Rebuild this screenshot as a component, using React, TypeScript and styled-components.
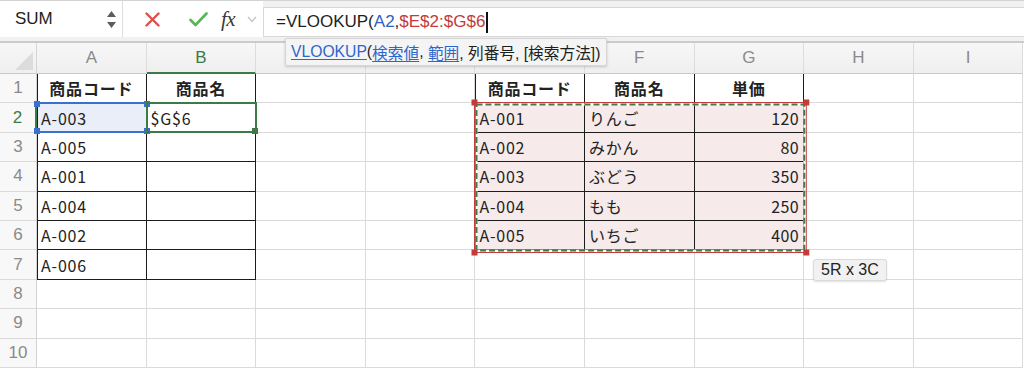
import React from 'react';
import styled, { createGlobalStyle } from 'styled-components';

const COLW = 109.6;
const ROWH = 29.4;
const HEADH = 31;
const RHW = 37;

const BLUE = '#3b6fd0';
const GREEN = '#3c7b48';
const RED = '#c23c3c';
const DARK = '#1c1c1c';
const GRID = '#dadada';

const GlobalStyle = createGlobalStyle`
  html, body { margin: 0; padding: 0; background: #fff; overflow: hidden; }
  body { font-family: "Liberation Sans", "Noto Sans CJK JP", sans-serif; }
  * { box-sizing: border-box; }
`;

const Page = styled.div`
  position: relative;
  width: 1024px;
  height: 369px;
  overflow: hidden;
  background: #fff;
`;

const Toolbar = styled.div`
  display: flex;
  height: 43px;
  border-top: 1px solid #d3d3d3;
  border-bottom: 2px solid #cbcbcb;
  padding-bottom: 4px;
  background: #f1f1f1;
`;

const NameBox = styled.div`
  width: 123px;
  background: #fff;
  border-right: 1px solid #dedede;
  display: flex;
  align-items: center;
  justify-content: space-between;
  padding: 0 6px 0 15px;
  font-size: 17px;
  color: #1e1e1e;
`;

const Spinner = styled.div`
  display: flex;
  flex-direction: column;
  gap: 5px;
  align-items: center;
`;

const IconGroup = styled.div`
  width: 140px;
  background: #fff;
  display: flex;
  align-items: center;
  padding-left: 22px;
`;

const IconSlot = styled.div<{ $w: number }>`
  width: ${(p) => p.$w}px;
  display: flex;
  align-items: center;
  justify-content: flex-start;
`;

const Fx = styled.span`
  font-family: "Liberation Serif", serif;
  font-style: italic;
  font-size: 21px;
  color: #3a3a3a;
  letter-spacing: -0.5px;
`;

const FormulaBox = styled.div`
  flex: 1;
  margin-top: 6px;
  background: #fff;
  border: 1px solid #d8d8d8;
  border-right: none;
  display: flex;
  align-items: center;
  padding-left: 12px;
  font-size: 17px;
  color: #1e1e1e;
  white-space: pre;
`;

const Tok = styled.span<{ $c?: string }>`
  color: ${(p) => p.$c || '#1e1e1e'};
`;

const Caret = styled.span`
  display: inline-block;
  width: 1.5px;
  height: 21px;
  background: #111;
  margin-left: 1px;
`;

const Tooltip = styled.div`
  position: absolute;
  left: 285px;
  top: 38px;
  height: 28px;
  background: #f4f4f4;
  border: 1px solid #d6d6d6;
  border-radius: 2px;
  box-shadow: 0 1px 3px rgba(0, 0, 0, 0.18);
  display: flex;
  align-items: center;
  padding: 0 6px 0 5px;
  font-size: 15.7px;
  color: #1e1e1e;
  white-space: pre;
  z-index: 5;
`;

const Link = styled.span`
  color: #2c66cf;
  text-decoration: underline;
  text-underline-offset: 2px;
`;

const Sheet = styled.div`
  position: relative;
  display: grid;
  grid-template-columns: ${RHW}px repeat(9, ${COLW}px);
  grid-template-rows: ${HEADH}px repeat(10, ${ROWH}px);
  width: 1024px;
  overflow: hidden;
`;

const Corner = styled.div`
  background: linear-gradient(#f7f7f7, #efefef);
  border-right: 1px solid #d6d6d6;
  border-bottom: 1px solid #c8c8c8;
  display: flex;
  align-items: flex-end;
  justify-content: flex-end;
  padding: 0 3px 3px 0;
`;

const ColHead = styled.div<{ $active?: boolean }>`
  background: linear-gradient(#f7f7f7, #efefef);
  border-right: 1px solid #dcdcdc;
  border-bottom: ${(p) => (p.$active ? `2px solid ${GREEN}` : '1px solid #c8c8c8')};
  display: flex;
  align-items: center;
  justify-content: center;
  font-size: 17px;
  color: ${(p) => (p.$active ? GREEN : '#8a8a8a')};
`;

const RowHead = styled.div<{ $active?: boolean }>`
  background: #f8f8f8;
  border-right: ${(p) => (p.$active ? `2px solid ${GREEN}` : '1px solid #d2d2d2')};
  border-bottom: 1px solid ${GRID};
  display: flex;
  align-items: center;
  justify-content: center;
  font-size: 17px;
  color: ${(p) => (p.$active ? GREEN : '#8a8a8a')};
`;

const Cell = styled.div<{
  $darkR?: boolean;
  $darkB?: boolean;
  $darkL?: boolean;
  $fill?: string;
  $align?: string;
  $bold?: boolean;
}>`
  border-right: 1px solid ${(p) => (p.$darkR ? DARK : GRID)};
  border-bottom: 1px solid ${(p) => (p.$darkB ? DARK : GRID)};
  box-shadow: ${(p) => (p.$darkL ? `inset 1px 0 0 ${DARK}` : 'none')};
  background: ${(p) => p.$fill || '#fff'};
  display: flex;
  align-items: center;
  justify-content: ${(p) =>
    p.$align === 'center' ? 'center' : p.$align === 'right' ? 'flex-end' : 'flex-start'};
  padding: 0 4px 0 4px;
  font-family: "Noto Sans CJK JP", sans-serif;
  font-size: 16px;
  letter-spacing: ${(p) => (p.$align === 'right' ? '0.4px' : '0.8px')};
  font-weight: ${(p) => (p.$bold ? 700 : 400)};
  color: #222;
  white-space: nowrap;
  overflow: hidden;
`;

const Overlay = styled.div`
  position: absolute;
  pointer-events: none;
`;

const RefBox = styled(Overlay)`
  border-top: 2px solid ${BLUE};
  border-bottom: 2px solid ${BLUE};
`;

const ActiveBox = styled(Overlay)`
  border: 2px solid ${GREEN};
`;

const Handle = styled.div<{ $c: string; $x: 'l' | 'r'; $y: 't' | 'b'; $s?: number }>`
  position: absolute;
  width: ${(p) => p.$s || 6}px;
  height: ${(p) => p.$s || 6}px;
  background: ${(p) => p.$c};
  ${(p) => (p.$x === 'l' ? 'left' : 'right')}: -3px;
  ${(p) => (p.$y === 't' ? 'top' : 'bottom')}: -3.5px;
`;

const Tag = styled.div`
  position: absolute;
  left: 813px;
  top: 216px;
  height: 22px;
  padding: 0 7px;
  background: #f1f1f1;
  border: 1px solid #dadada;
  border-radius: 3px;
  box-shadow: 0 1px 2px rgba(0, 0, 0, 0.12);
  display: flex;
  align-items: center;
  font-size: 16px;
  color: #222;
`;

type CellDef = {
  text?: string;
  bold?: boolean;
  align?: string;
  fill?: string;
  darkR?: boolean;
  darkB?: boolean;
  darkL?: boolean;
};

const leftA = ['A-003', 'A-005', 'A-001', 'A-004', 'A-002', 'A-006'];
const rightE = ['A-001', 'A-002', 'A-003', 'A-004', 'A-005'];
const rightF = ['りんご', 'みかん', 'ぶどう', 'もも', 'いちご'];
const rightG = ['120', '80', '350', '250', '400'];

function buildCells(): CellDef[][] {
  const rows: CellDef[][] = [];
  for (let r = 0; r < 10; r++) {
    const row: CellDef[] = [];
    for (let c = 0; c < 9; c++) {
      const d: CellDef = {};
      const inLeft = r <= 6 && c <= 1;
      const inRight = r <= 5 && c >= 4 && c <= 6;
      if (inLeft || inRight) {
        d.darkR = true;
        d.darkB = true;
        if (c === 0 || c === 4) d.darkL = true;
      }
      if (r === 0) {
        if (c === 0) d.text = '商品コード';
        if (c === 1) d.text = '商品名';
        if (c === 4) d.text = '商品コード';
        if (c === 5) d.text = '商品名';
        if (c === 6) d.text = '単価';
        if (d.text) {
          d.bold = true;
          d.align = 'center';
        }
      } else {
        if (c === 0 && r <= 6) d.text = leftA[r - 1];
        if (c === 1 && r === 1) d.text = '$G$6';
        if (r <= 5 && c === 4) d.text = rightE[r - 1];
        if (r <= 5 && c === 5) d.text = rightF[r - 1];
        if (r <= 5 && c === 6) {
          d.text = rightG[r - 1];
          d.align = 'right';
        }
        if (r <= 5 && inRight) d.fill = '#f6eaea';
        if (r === 1 && c === 0) d.fill = '#e9eef9';
      }
      row.push(d);
    }
    rows.push(row);
  }
  return rows;
}

const cols = ['A', 'B', 'C', 'D', 'E', 'F', 'G', 'H', 'I'];

const Ants: React.FC<{ left: number; top: number; w: number; h: number }> = ({ left, top, w, h }) => {
  const W = w + 4;
  const H = h + 4;
  return (
    <Overlay style={{ left: left - 1.5, top: top - 1.5, width: W, height: H }}>
      <svg width={W} height={H} style={{ overflow: 'visible', display: 'block' }}>
        <rect x={0.5} y={0.5} width={W - 1} height={H - 1} fill="none" stroke={RED} strokeWidth={1} />
        <rect x={2.5} y={2.5} width={W - 5} height={H - 5} fill="none" stroke="#fff" strokeWidth={2} />
        <rect
          x={2.5}
          y={2.5}
          width={W - 5}
          height={H - 5}
          fill="none"
          stroke={GREEN}
          strokeWidth={2}
          strokeDasharray="6 3"
        />
        <rect x={-2.5} y={-2.5} width={6} height={6} fill={RED} />
        <rect x={W - 3.5} y={-2.5} width={6} height={6} fill={RED} />
        <rect x={-2.5} y={H - 3.5} width={6} height={6} fill={RED} />
        <rect x={W - 3.5} y={H - 3.5} width={6} height={6} fill={RED} />
      </svg>
    </Overlay>
  );
};

export default function App() {
  const cells = buildCells();
  const colX = (c: number) => RHW + c * COLW;
  const rowY = (r: number) => HEADH + r * ROWH;

  return (
    <Page>
      <GlobalStyle />
      <Toolbar>
        <NameBox>
          <span>SUM</span>
          <Spinner>
            <svg width="9" height="6" viewBox="0 0 9 6">
              <path d="M4.5 0 L9 6 L0 6 Z" fill="#5c5c5c" />
            </svg>
            <svg width="9" height="6" viewBox="0 0 9 6">
              <path d="M0 0 L9 0 L4.5 6 Z" fill="#5c5c5c" />
            </svg>
          </Spinner>
        </NameBox>
        <IconGroup>
          <IconSlot $w={44}>
            <svg width="15" height="15" viewBox="0 0 15 15">
              <path d="M1.5 1.5 L13.5 13.5 M13.5 1.5 L1.5 13.5" stroke="#de4f4f" strokeWidth="2.4" strokeLinecap="round" />
            </svg>
          </IconSlot>
          <IconSlot $w={32}>
            <svg width="19" height="15" viewBox="0 0 19 15">
              <path d="M1.5 8 L6.5 13 L17.5 1.5" stroke="#57b55a" strokeWidth="2.6" fill="none" strokeLinecap="round" strokeLinejoin="round" />
            </svg>
          </IconSlot>
          <IconSlot $w={26}>
            <Fx>fx</Fx>
          </IconSlot>
          <IconSlot $w={12}>
            <svg width="10" height="7" viewBox="0 0 10 7">
              <path d="M1 1 L5 5.5 L9 1" stroke="#c4c4c4" strokeWidth="1.3" fill="none" />
            </svg>
          </IconSlot>
        </IconGroup>
        <FormulaBox>
          <Tok>=VLOOKUP(</Tok>
          <Tok $c="#2e62c2">A2</Tok>
          <Tok>,</Tok>
          <Tok $c="#c43a3a">$E$2:$G$6</Tok>
          <Caret />
        </FormulaBox>
      </Toolbar>

      <Tooltip>
        <Link>VLOOKUP</Link>(<Link>検索値</Link>, <Link>範囲</Link>, 列番号, [検索方法])
      </Tooltip>

      <Sheet>
        <Corner>
          <svg width="18" height="18" viewBox="0 0 18 18">
            <path d="M18 0 L18 18 L0 18 Z" fill="#dcdcdc" />
          </svg>
        </Corner>
        {cols.map((c) => (
          <ColHead key={c} $active={c === 'B'}>
            {c}
          </ColHead>
        ))}
        {cells.map((row, r) => (
          <React.Fragment key={r}>
            <RowHead $active={r === 1}>{r + 1}</RowHead>
            {row.map((d, c) => (
              <Cell
                key={c}
                $darkR={d.darkR}
                $darkB={d.darkB}
                $darkL={d.darkL}
                $fill={d.fill}
                $align={d.align}
                $bold={d.bold}
              >
                {d.text}
              </Cell>
            ))}
          </React.Fragment>
        ))}

        <RefBox style={{ left: colX(0), top: rowY(1) - 1, width: COLW, height: ROWH + 1 }}>
          <Handle $c={BLUE} $x="l" $y="t" />
          <Handle $c={BLUE} $x="r" $y="t" />
          <Handle $c={BLUE} $x="l" $y="b" />
          <Handle $c={BLUE} $x="r" $y="b" />
        </RefBox>
        <ActiveBox style={{ left: colX(1) - 1, top: rowY(1) - 1, width: COLW + 2, height: ROWH + 1 }}>
          <Handle $c={GREEN} $x="r" $y="b" />
        </ActiveBox>
        <Ants left={colX(4)} top={rowY(1)} w={3 * COLW} h={5 * ROWH} />
        <Tag>5R x 3C</Tag>
      </Sheet>
    </Page>
  );
}
